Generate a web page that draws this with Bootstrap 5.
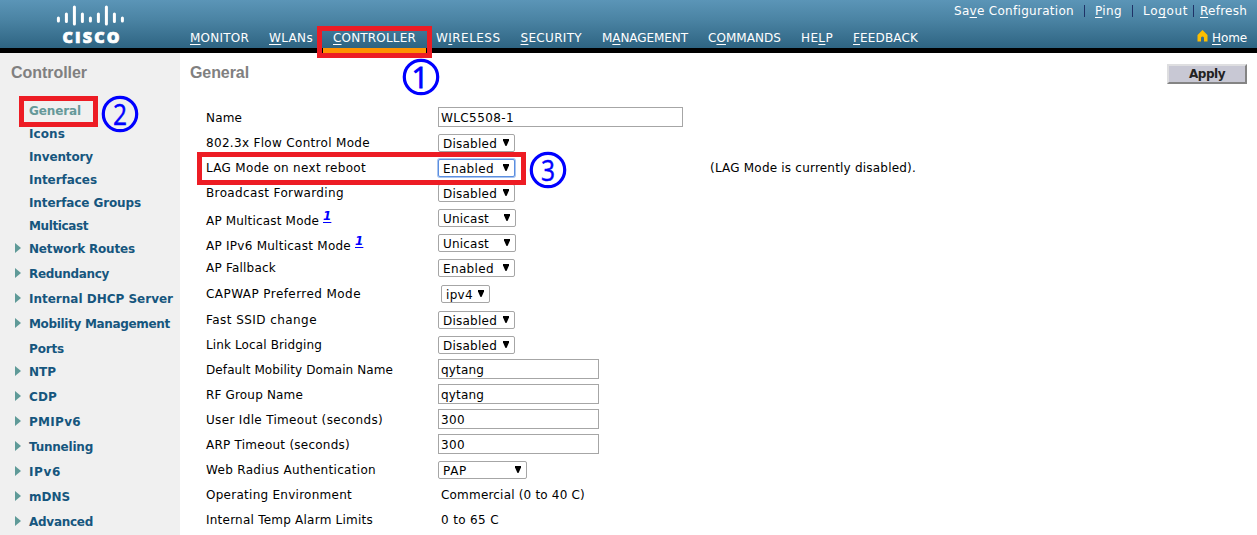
<!DOCTYPE html>
<html lang="en">
<head>
<meta charset="utf-8">
<meta name="viewport" content="width=device-width, initial-scale=1">
<title>Cisco Controller - General</title>
<link href="https://cdn.jsdelivr.net/npm/bootstrap@5.3.0/dist/css/bootstrap.min.css" rel="stylesheet">
<style>
body{font:12px/25px "DejaVu Sans",Verdana,sans-serif;color:#000;height:535px;overflow:hidden;background:#fff}
a{color:inherit;text-decoration:none}
u{text-underline-offset:2px}
[data-w]{white-space:nowrap;display:inline-block}
.masthead{height:53px;background:linear-gradient(#5b95b7,#4b84a4 40%,#2e6482);border-bottom:5px solid #000;color:#fff}
.logo{width:190px;padding-left:56px;flex:none}
.mainnav{line-height:18px;height:24px;padding:0;gap:20px;margin-bottom:-5px}
.mainnav a{height:24px}
.mainnav .current{position:relative;z-index:1;width:103px;margin:0 -10px;padding-left:10px;border-bottom:5px solid #ff9200}
.util{right:10px;line-height:18px;padding-top:2px}
.bar{width:1px;height:12px;background:#1f3266}
.callout-box{position:absolute;border:5px solid #ed1c24;pointer-events:none;z-index:3}
.callout-num{position:absolute;width:38px;height:38px;z-index:4;overflow:visible;font:400 30px "Open Sans",sans-serif}
.side{width:180px;height:482px;background:#f0f0f0;flex:none}
.title{font:bold 16px/20px "Liberation Sans",Arial,sans-serif;color:#808080;margin:0}
.side ul{margin-top:17px;font-weight:bold;color:#16567e;line-height:23px}
.side li{padding-left:29px;position:relative;height:23px}
.side li.sub{height:25px;padding-left:15px}
.side li.sub svg{width:6px;height:10px;margin:5px 8px 0 0}
.side .on{color:#669999}
.apply{width:80px;height:20px;border:2px solid;border-color:#dedee0 #848484 #848484 #dedee0;background:#c8c8d4;color:#222;font:bold 12px/17px "DejaVu Sans",Verdana,sans-serif;padding:0;margin:11px 10px 0 0;border-radius:0}
.setting{height:25px;line-height:27px;position:relative;padding-left:26px}
.setting .caption{width:232px;flex:none}
.setting.noted .caption{padding-top:3px}
.setting.noted a{color:#00f;font:italic bold 12px/12px "DejaVu Sans",sans-serif;text-decoration:underline;text-underline-offset:2px;position:relative;top:-5px;margin-left:4px}
.setting.tall{height:27px;line-height:29px}
.entry{height:20px;width:161px;border:1px solid #a6a6a6;margin-top:2px;padding:0 2px;line-height:20px;background:#fff}
.entry.wide{width:245px}
.pick{height:18px;width:77px;border:1px solid #a6a6a6;border-radius:2px;margin-top:4px;padding:0 5px 0 4px;line-height:19px;background:#fff}
.pick svg{width:6px;height:7px;margin-top:4px}
.pick.focused{border-color:#5b8ee0;box-shadow:0 0 0 1px #a9c5f0}
.plain{padding-left:3px}
</style>
</head>
<body>
<header class="masthead d-flex position-relative">
  <div class="logo">
    <svg width="70" height="48" viewBox="56 0 70 48" class="d-block">
      <g stroke="#fff" stroke-width="3" stroke-linecap="round">
        <path d="M58.4 18v3M66.4 14v7.500M74.400 7v17M82.400 14v7.500M90.400 18v3M98.400 14v7.500M106.400 7v17M114.400 14v7.500M122.400 18v3"/>
      </g>
      <text x="62.500" y="42.700" textLength="57" lengthAdjust="spacing" fill="#fff" stroke="#fff" stroke-width=".7" font-family="Open Sans,sans-serif" font-weight="800" font-size="16">CISCO</text>
    </svg>
  </div>
  <nav class="mainnav d-flex align-self-end">
    <a href="#" data-w="59"><u>M</u>ONITOR</a>
    <a href="#" data-w="44"><u>W</u>LANs</a>
    <a href="#" class="current"><span data-w="83"><u>C</u>ONTROLLER</span>
      <span class="callout-box" style="left:-6px;top:-3px;width:115px;height:32px"></span>
      <svg class="callout-num" style="left:79px;top:29px" viewBox="0 0 38 38"><circle cx="19" cy="19" r="16.700" fill="none" stroke="#00f" stroke-width="3.200"/><text x="18" y="30" text-anchor="middle" fill="#00f" stroke="#00f" stroke-width=".8">1</text></svg>
    </a>
    <a href="#" data-w="64.500">W<u>I</u>RELESS</a>
    <a href="#" data-w="61.500"><u>S</u>ECURITY</a>
    <a href="#" data-w="86">M<u>A</u>NAGEMENT</a>
    <a href="#" data-w="73">C<u>O</u>MMANDS</a>
    <a href="#" data-w="32">HE<u>L</u>P</a>
    <a href="#" data-w="65"><u>F</u>EEDBACK</a>
  </nav>
  <div class="util position-absolute top-0">
    <div class="d-flex align-items-center">
      <a href="#" data-w="120">Sa<u>v</u>e Configuration</a><span class="bar" style="margin:0 10px"></span>
      <a href="#" data-w="27"><u>P</u>ing</a><span class="bar" style="margin:0 10px"></span>
      <a href="#" data-w="45">Lo<u>g</u>out</a><span class="bar" style="margin:0 6px 0 5px"></span>
      <a href="#" data-w="47"><u>R</u>efresh</a>
    </div>
    <div class="d-flex justify-content-end" style="padding-top:9px">
      <svg width="11" height="12" viewBox="0 0 11 12" style="margin:1px 4px 0 0"><path d="M5.500 0 10.500 5v6.500H7V7.500Q5.500 5.500 4 7.500v4H.5V5Z" fill="#fdbe00"/></svg>
      <a href="#" data-w="35"><u>H</u>ome</a>
    </div>
  </div>
</header>
<div class="d-flex">
  <aside class="side">
    <h1 class="title" style="padding:10px 0 0 11px"><span data-w="76">Controller</span></h1>
    <ul class="list-unstyled mb-0" id="menu"></ul>
  </aside>
  <main class="flex-grow-1">
    <div class="d-flex justify-content-between" style="height:52px">
      <h2 class="title" style="padding:10px 0 0 10px"><span data-w="59">General</span></h2>
      <button class="btn apply"><span data-w="36">Apply</span></button>
    </div>
    <div id="settings"></div>
  </main>
</div>
<script>
const ring = (n, x, y) => `<svg class="callout-num" style="left:${x}px;top:${y}px" viewBox="0 0 38 38"><circle cx="19" cy="19" r="16.700" fill="none" stroke="#00f" stroke-width="3.200"/><text x="12" y="29.500" textLength="14" lengthAdjust="spacingAndGlyphs" fill="#00f" stroke="#00f" stroke-width=".5">${n}</text></svg>`;
const box = (x, y, w, h) => `<span class="callout-box" style="left:${x}px;top:${y}px;width:${w}px;height:${h}px"></span>`;

// label, text width, expandable
const menu = [["General",52],["Icons",36],["Inventory",64],["Interfaces",68],["Interface Groups",112],["Multicast",59],["Network Routes",106,1],["Redundancy",80,1],["Internal DHCP Server",144,1],["Mobility Management",141,1],["Ports",35],["NTP",27,1],["CDP",28,1],["PMIPv6",52,1],["Tunneling",64,1],["IPv6",32,1],["mDNS",41,1],["Advanced",64,1]];
document.getElementById("menu").innerHTML = menu.map(([t, w, s], i) =>
  `<li class="${s ? "sub d-flex" : ""}">${s ? '<svg viewBox="0 0 6 10"><path d="M0 0 6 5 0 10Z" fill="#5f9a98"/></svg>' : ""}<a href="#" data-w="${w}" class="${i ? "" : "on"}">${t}</a>${i ? "" : box(19, -4, 79, 31) + ring(2, 101, -5.5)}</li>`).join("");

// label, text width, control, value, value width, control width
const rows = [
["Name",36,"entry wide","WLC5508-1",73],
["802.3x Flow Control Mode",164,"pick","Disabled",54],
["LAG Mode on next reboot",160,"pick focused","Enabled",51],
["Broadcast Forwarding",138,"pick","Disabled",54],
["AP Multicast Mode",113,"pick","Unicast",46,78],
["AP IPv6 Multicast Mode",145,"pick","Unicast",46,78],
["AP Fallback",70,"pick","Enabled",51],
["CAPWAP Preferred Mode",155,"pick","ipv4",27,49],
["Fast SSID change",111,"pick","Disabled",54],
["Link Local Bridging",116,"pick","Disabled",54],
["Default Mobility Domain Name",187,"entry","qytang",43],
["RF Group Name",97,"entry","qytang",43],
["User Idle Timeout (seconds)",177,"entry","300",24],
["ARP Timeout (seconds)",144,"entry","300",24],
["Web Radius Authentication",170,"pick","PAP",24,89],
["Operating Environment",146,"plain","Commercial (0 to 40 C)",144],
["Internal Temp Alarm Limits",167,"plain","0 to 65 C",58]];
document.getElementById("settings").innerHTML = rows.map(([l, w, c, v, vw, cw], i) => {
  const noted = i == 4 || i == 5, tall = i == 7;
  const arrow = c.startsWith("pick") ? '<svg viewBox="0 0 6 7"><path d="M0 0H6V1.500L3.500 7H2.500L0 1.500Z"/></svg>' : "";
  const size = cw ? ` style="width:${cw}px${tall ? ";margin:5px 0 0 3px" : ""}"` : "";
  return `<div class="setting d-flex align-items-start ${noted ? "noted" : ""} ${tall ? "tall" : ""}"><div class="caption"><span data-w="${w}">${l}</span>${noted ? '<a href="#">1</a>' : ""}</div><div class="${c} d-flex justify-content-between"${size}><span data-w="${vw}">${v}</span>${arrow}</div>${i == 2 ? '<span style="margin-left:195px" data-w="206">(LAG Mode is currently disabled).</span>' + box(17, -3, 329, 33) + ring(3, 349, -4.5) : ""}</div>`;
}).join("");

// even out tracking so each text takes its set width
document.querySelectorAll("[data-w]").forEach(e => {
  const r = document.createRange(); r.selectNodeContents(e);
  e.style.letterSpacing = (e.dataset.w - r.getBoundingClientRect().width) / e.textContent.length + "px";
});
</script>
<script src="https://cdn.jsdelivr.net/npm/bootstrap@5.3.0/dist/js/bootstrap.bundle.min.js"></script>
</body>
</html>
